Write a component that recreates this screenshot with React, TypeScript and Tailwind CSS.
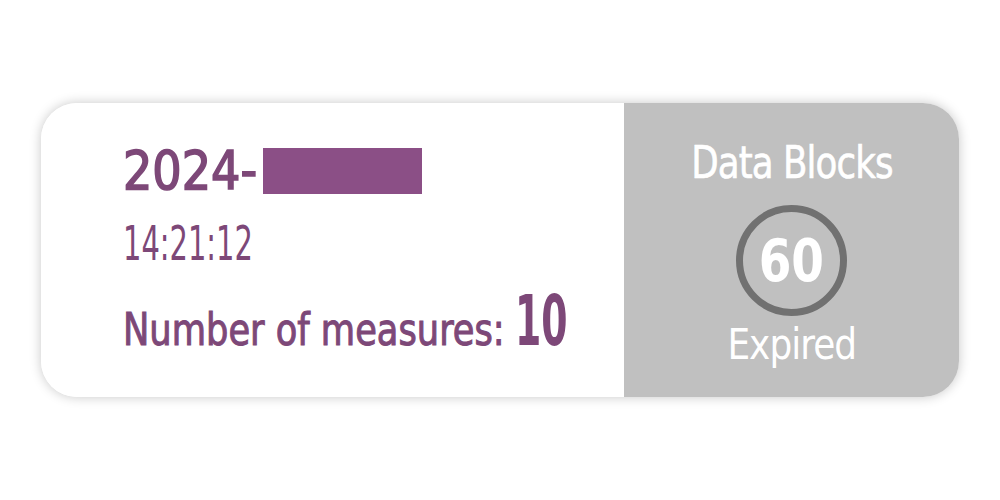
import React from "react";

export default function App() {
  const font = { fontFamily: '"DejaVu Sans Condensed", "DejaVu Sans", sans-serif' };
  return (
    <div className="w-[1000px] h-[500px] bg-white flex items-center justify-center" style={font}>
      <div className="w-[918px] h-[294px] rounded-[36px] overflow-hidden flex shadow-[0_0_12px_rgba(0,0,0,0.22)]">
        <div className="w-[583px] bg-white pl-[82px] pt-[40px] flex flex-col text-[#7d4878]">
          <div className="flex items-center h-[56px]">
            <span className="w-[140px] whitespace-nowrap">
              <span className="inline-block origin-left scale-x-[0.95] text-[54px] leading-none font-normal [-webkit-text-stroke:1.6px_#7d4878]">2024-</span>
            </span>
            <span className="inline-block w-[159px] h-[46px] bg-[#8b4f86]"></span>
          </div>
          <div className="mt-[20px] h-[44px] whitespace-nowrap">
            <span className="inline-block origin-left scale-x-[0.67] text-[48px] leading-none font-light">14:21:12</span>
          </div>
          <div className="mt-[31px] flex items-end h-[58px]">
            <span className="w-[392px] whitespace-nowrap">
              <span className="inline-block origin-left scale-x-[0.89] text-[44px] leading-none [-webkit-text-stroke:1px_#7d4878]">Number of measures:</span>
            </span>
            <span className="whitespace-nowrap">
              <span className="inline-block origin-left scale-x-[0.6] text-[70px] leading-[0.8] font-bold">10</span>
            </span>
          </div>
        </div>
        <div className="flex-1 bg-[#c0c0c0] flex flex-col items-center pt-[38px] text-white">
          <div className="whitespace-nowrap">
            <span className="inline-block scale-x-[0.9] text-[44px] leading-none tracking-[-1px] [-webkit-text-stroke:0.6px_#ffffff]">Data Blocks</span>
          </div>
          <div className="mt-[20px] w-[111px] h-[111px] rounded-full border-[7px] border-[#717171] flex items-center justify-center">
            <span className="inline-block scale-x-[0.9] text-[58px] leading-none font-bold">60</span>
          </div>
          <div className="mt-[8px] whitespace-nowrap">
            <span className="inline-block scale-x-[0.95] text-[42px] leading-none font-light tracking-[-1px]">Expired</span>
          </div>
        </div>
      </div>
    </div>
  );
}
